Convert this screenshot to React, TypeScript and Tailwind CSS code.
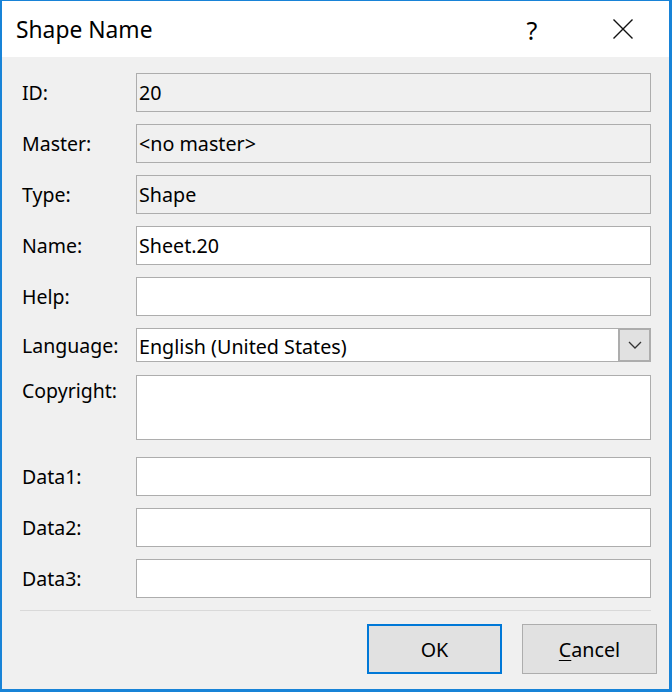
import React from "react";

const FONT = { fontFamily: '"Noto Sans", "Open Sans", sans-serif' };

function Row({
  label,
  children,
  className = "",
  top = false,
  h = "h-[39px]",
}: {
  label: string;
  children: React.ReactNode;
  className?: string;
  top?: boolean;
  h?: string;
}) {
  return (
    <div className={`flex ${top ? "items-start" : "items-center"} ${className}`}>
      <div
        className={`w-[114px] shrink-0 text-[19.5px] text-black leading-[26px] ${top ? "pt-[3px]" : "pt-px"}`}
      >
        {label}
      </div>
      <div className={`w-[515px] ${h}`}>{children}</div>
    </div>
  );
}

function Field({ value = "", readOnly = false }: { value?: string; readOnly?: boolean }) {
  return (
    <div
      className={`h-full w-full border border-[#adadad] ${readOnly ? "bg-[#f0f0f0]" : "bg-white"} flex items-center pl-[2px] pt-px text-[19.7px] text-black leading-none`}
    >
      {value}
    </div>
  );
}

export default function App() {
  return (
    <div
      className="w-[672px] h-[692px] border-l-2 border-r-[3px] border-t border-b-[3px] border-[#1883d7] bg-[#f0f0f0] flex flex-col"
      style={FONT}
    >
      {/* Title bar */}
      <div className="h-[56px] bg-white flex items-center pl-[14px] relative shrink-0">
        <div className="text-[22.8px] text-black leading-none mt-[3px]">Shape Name</div>
        <div className="ml-auto flex items-center">
          <div className="text-[25px] text-black leading-none w-[30px] text-center mr-[65px] mt-[2px]">?</div>
          <svg width="22" height="22" viewBox="0 0 22 22" className="mr-[35px]">
            <path d="M1.5 1.5 L20.5 20.5 M20.5 1.5 L1.5 20.5" stroke="#111" strokeWidth="1.4" fill="none" />
          </svg>
        </div>
      </div>

      {/* Body */}
      <div className="flex-1 flex flex-col pl-[20px] pt-[16px]">
        <Row label="ID:">
          <Field value="20" readOnly />
        </Row>
        <Row label="Master:" className="mt-[12px]">
          <Field value="<no master>" readOnly />
        </Row>
        <Row label="Type:" className="mt-[12px]">
          <Field value="Shape" readOnly />
        </Row>
        <Row label="Name:" className="mt-[12px]">
          <Field value="Sheet.20" />
        </Row>
        <Row label="Help:" className="mt-[12px]">
          <Field />
        </Row>
        <Row label="Language:" className="mt-[12px]" h="h-[34px]">
          <div className="h-full w-full border border-[#adadad] bg-white flex items-stretch">
            <div className="flex-1 flex items-center pl-[2px] pt-[3px] text-[19.7px] text-black leading-none">
              English (United States)
            </div>
            <div className="w-[33px] -my-[1px] -mr-[1px] border-2 border-[#adadad] bg-[#e1e1e1] flex items-center justify-center">
              <svg width="14" height="8" viewBox="0 0 14 8">
                <path d="M1 1 L7 7 L13 1" stroke="#333" strokeWidth="1.3" fill="none" />
              </svg>
            </div>
          </div>
        </Row>
        <Row label="Copyright:" className="mt-[13px]" h="h-[65px]" top>
          <Field />
        </Row>
        <Row label="Data1:" className="mt-[17px]">
          <Field />
        </Row>
        <Row label="Data2:" className="mt-[12px]">
          <Field />
        </Row>
        <Row label="Data3:" className="mt-[12px]">
          <Field />
        </Row>

        <div className="mt-[12px] h-px w-[631px] -ml-[2px] bg-[#d9d9d9]" />

        <div className="mt-[13px] flex justify-end pr-[12px] gap-[20px]">
          <button className="w-[135px] h-[50px] border-2 border-[#0078d7] bg-[#e1e1e1] text-[19.7px] text-black leading-none pt-[2px]">
            OK
          </button>
          <button className="w-[135px] h-[50px] border border-[#adadad] bg-[#e1e1e1] text-[19.7px] text-black leading-none pt-[2px]">
            <span className="underline underline-offset-[3px] decoration-1">C</span>ancel
          </button>
        </div>
      </div>
    </div>
  );
}
